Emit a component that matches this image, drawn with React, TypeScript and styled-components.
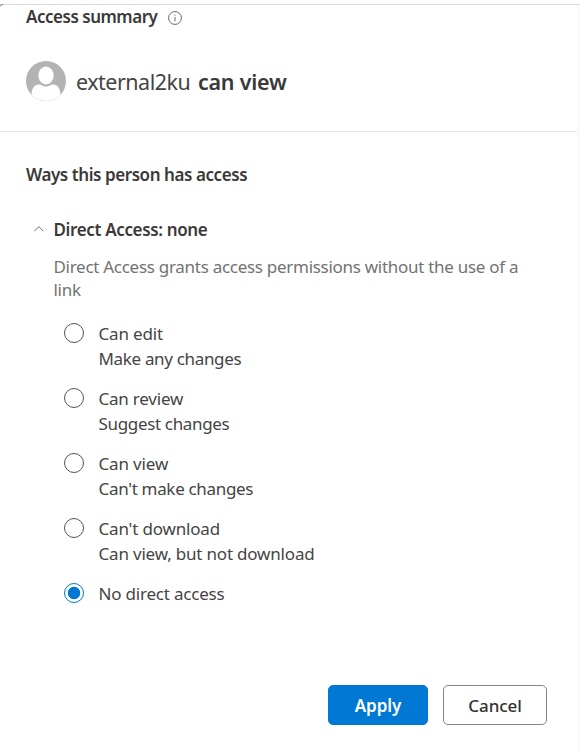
import React, { useState } from 'react';
import styled, { createGlobalStyle } from 'styled-components';

const GlobalStyle = createGlobalStyle`
  * { box-sizing: border-box; }
  body { margin: 0; background: #fff; overflow: hidden; }
`;

const Page = styled.main`
  position: relative;
  width: 580px;
  height: 751px;
  padding-top: 4px;
  background: #fff;
  color: #454443;
  font: 400 17px/24px "Noto Sans", "Open Sans", sans-serif;
`;

const Panel = styled.section`
  height: 747px;
  border-top: 1px solid #d9d9d9;
  display: flex;
  flex-direction: column;
  background: linear-gradient(to right, #fff 577px, #fafafa 577px);
`;

const Corner = styled.svg`
  position: absolute;
  left: 0;
  top: 4px;
`;

const Text = styled.span<{ $tracking?: number }>`
  letter-spacing: ${({ $tracking = 0 }) => $tracking}px;
  white-space: nowrap;
`;

const Strong = styled(Text)`
  font-weight: 560;
  color: #3a3938;
`;

const Header = styled.header`
  width: 577px;
  height: 127px;
  padding-left: 26px;
  border-bottom: 1px solid #e8e8e8;
`;

const Summary = styled.div`
  height: 24px;
  display: flex;
  align-items: center;
  justify-content: space-between;
  width: 156px;
`;

const InfoIcon = styled.svg`
  display: block;
  flex: none;
  margin-top: 2px;
`;

const Person = styled.div`
  height: 40px;
  margin-top: 32px;
  display: flex;
  align-items: center;
  font-size: 21.5px;
  line-height: 30px;
`;

const Avatar = styled.svg`
  flex: none;
  margin-right: 10px;
`;

const PersonName = styled(Text)`
  width: 122px;
  padding-top: 2px;
`;

const Permission = styled(Strong)`
  padding-top: 2px;
`;

const Body = styled.div`
  padding: 31px 0 0 26px;
`;

const Heading = styled.h2`
  margin: 0;
  height: 24px;
  font: inherit;
`;

const AccessHeader = styled.div`
  height: 24px;
  margin-top: 31px;
  padding-left: 7px;
  display: flex;
  align-items: center;
`;

const Chevron = styled.svg`
  margin-right: 8.5px;
`;

const Description = styled.p`
  width: 490px;
  margin: 13px 0 0 27.5px;
  line-height: 23px;
  letter-spacing: -0.285px;
  color: #737271;
`;

const Options = styled.div`
  margin: 20px 0 0 38px;
  display: flex;
  flex-direction: column;
  gap: 15px;
`;

const Option = styled.label`
  display: flex;
  align-items: flex-start;
  cursor: pointer;
`;

const Radio = styled.input`
  appearance: none;
  flex: none;
  width: 20px;
  height: 20px;
  margin: 2px 14.5px 0 0;
  border: 1px solid #565554;
  border-radius: 50%;
  background: #fff;

  &:checked {
    border-color: #0078d4;
    background: radial-gradient(circle, #0078d4 5.8px, #fff 6.6px);
  }
`;

const OptionText = styled.span`
  display: flex;
  flex-direction: column;
  line-height: 25px;
`;

const Footer = styled.footer`
  margin-top: auto;
  padding: 0 33px 26px 0;
  display: flex;
  justify-content: flex-end;
  gap: 15px;
`;

const Button = styled.button<{ $primary?: boolean }>`
  width: ${({ $primary }) => ($primary ? 100 : 104)}px;
  height: 40px;
  padding: 1px 0 0;
  border: 1px solid ${({ $primary }) => ($primary ? '#0078d4' : '#858483')};
  border-radius: 5px;
  background: ${({ $primary }) => ($primary ? '#0078d4' : '#fff')};
  color: ${({ $primary }) => ($primary ? '#fff' : '#333231')};
  font: inherit;
  font-weight: ${({ $primary }) => ($primary ? 600 : 540)};
`;

type Choice = { label: string; tracking: number; hint?: string; hintTracking?: number };

const choices: Choice[] = [
  { label: 'Can edit', tracking: -0.15, hint: 'Make any changes', hintTracking: -0.33 },
  { label: 'Can review', tracking: -0.22, hint: 'Suggest changes', hintTracking: -0.34 },
  { label: 'Can view', tracking: -0.15, hint: "Can't make changes", hintTracking: -0.32 },
  { label: "Can't download", tracking: -0.18, hint: 'Can view, but not download', hintTracking: -0.19 },
  { label: 'No direct access', tracking: -0.2 },
];

export default function App() {
  const [selected, setSelected] = useState(4);
  return (
    <Page>
      <GlobalStyle />
      <Panel>
        <Header>
          <Summary>
            <Strong $tracking={-0.48}>Access summary</Strong>
            <InfoIcon width="14" height="14" viewBox="0 0 14 14" fill="none" stroke="#5a5958">
              <circle cx="7" cy="7" r="6.4" strokeWidth="0.9" />
              <path d="M7 6v4.3M7 3.7v1.1" strokeWidth="0.9" />
            </InfoIcon>
          </Summary>
          <Person>
            <Avatar width="40" height="40" viewBox="0 0 40 40">
              <defs>
                <clipPath id="avatar"><circle cx="20" cy="20" r="20" /></clipPath>
              </defs>
              <g clipPath="url(#avatar)">
                <rect width="40" height="40" fill="#b3b3b3" />
                <ellipse cx="20" cy="14.5" rx="7.7" ry="8.9" fill="#fff" />
                <path d="M5.500 40V33C6 26.500 9 23.500 13 23.500C15.500 23.500 16.500 25.500 20 25.500S24.500 23.500 27 23.500C31 23.500 34 26.500 34.500 33V40Z" fill="#fff" />
              </g>
              <path d="M6 34.300A19.700 19.700 0 0 0 34 34.300" fill="none" stroke="#e6e6e6" strokeWidth="0.6" />
            </Avatar>
            <PersonName $tracking={-0.5}>external2ku</PersonName>
            <Permission $tracking={-0.25}>can view</Permission>
          </Person>
        </Header>
        <Body>
          <Heading><Strong $tracking={-0.43}>Ways this person has access</Strong></Heading>
          <AccessHeader>
            <Chevron width="12" height="8" viewBox="0 0 12 8" fill="none" stroke="#605e5c" strokeWidth="0.9">
              <path d="M1.300 5.200L5.800 0.700L10.300 5.200" />
            </Chevron>
            <Strong $tracking={-0.35}>Direct Access: none</Strong>
          </AccessHeader>
          <Description>Direct Access grants access permissions without the use of a link</Description>
          <Options role="radiogroup">
            {choices.map((c, i) => (
              <Option key={c.label}>
                <Radio type="radio" name="access" checked={selected === i} onChange={() => setSelected(i)} />
                <OptionText>
                  <Text $tracking={c.tracking}>{c.label}</Text>
                  {c.hint && <Text $tracking={c.hintTracking}>{c.hint}</Text>}
                </OptionText>
              </Option>
            ))}
          </Options>
        </Body>
        <Footer>
          <Button $primary><Text $tracking={-0.05}>Apply</Text></Button>
          <Button><Text $tracking={-0.1}>Cancel</Text></Button>
        </Footer>
      </Panel>
      <Corner width="5" height="4" viewBox="0 0 5 4" fill="none" stroke="#777">
        <path d="M0 2.200Q0.800 0.800 3 0.500" />
      </Corner>
    </Page>
  );
}
